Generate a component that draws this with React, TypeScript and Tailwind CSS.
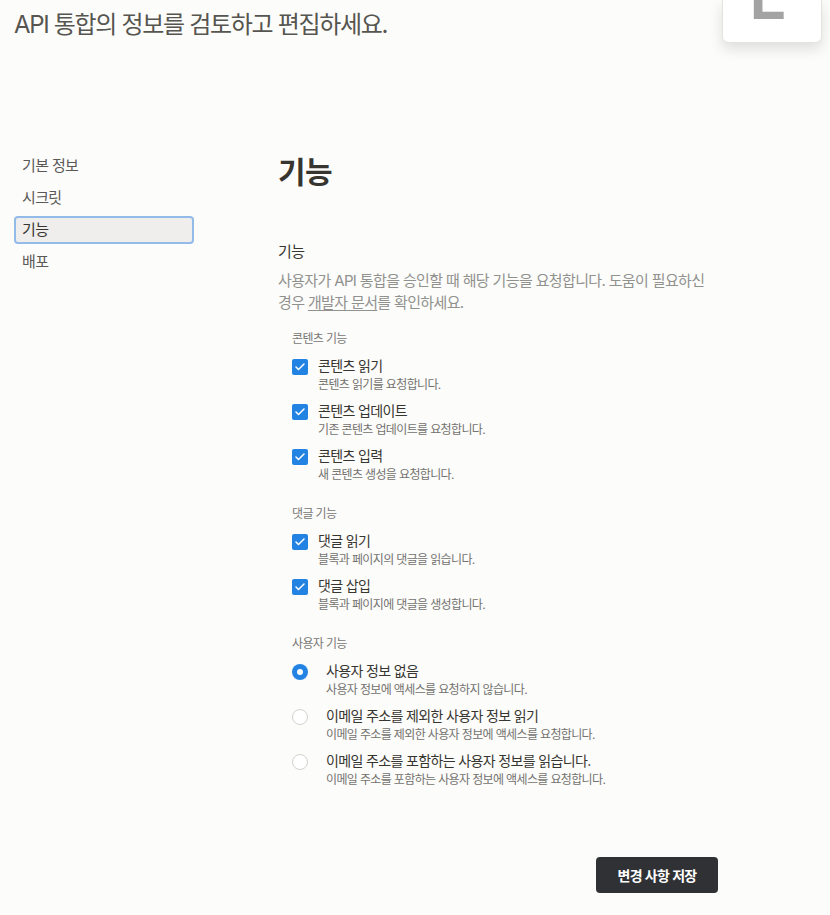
import { Check } from "lucide-react";

const FONT = "font-['Inter','Noto_Sans_CJK_KR',sans-serif] tracking-[-0.04em]";

type Item = { label: string; desc: string; checked?: boolean };

const CONTENT: Item[] = [
  { label: "콘텐츠 읽기", desc: "콘텐츠 읽기를 요청합니다." },
  { label: "콘텐츠 업데이트", desc: "기존 콘텐츠 업데이트를 요청합니다." },
  { label: "콘텐츠 입력", desc: "새 콘텐츠 생성을 요청합니다." },
];

const COMMENTS: Item[] = [
  { label: "댓글 읽기", desc: "블록과 페이지의 댓글을 읽습니다." },
  { label: "댓글 삽입", desc: "블록과 페이지에 댓글을 생성합니다." },
];

const USERS: Item[] = [
  { label: "사용자 정보 없음", desc: "사용자 정보에 액세스를 요청하지 않습니다.", checked: true },
  { label: "이메일 주소를 제외한 사용자 정보 읽기", desc: "이메일 주소를 제외한 사용자 정보에 액세스를 요청합니다." },
  { label: "이메일 주소를 포함하는 사용자 정보를 읽습니다.", desc: "이메일 주소를 포함하는 사용자 정보에 액세스를 요청합니다." },
];

const NAV = ["기본 정보", "시크릿", "기능", "배포"];

function CheckRow({ item }: { item: Item }) {
  return (
    <div className="flex gap-[10px]">
      <div className="mt-[3px] flex h-4 w-4 shrink-0 items-center justify-center rounded-[2px] bg-[#2383e2]">
        <Check className="h-3 w-3 text-white" strokeWidth={3} />
      </div>
      <div>
        <div className="text-[14px] leading-5 text-[#37352f]">{item.label}</div>
        <div className="mt-[1px] text-[12px] leading-4 text-[#73726e]">{item.desc}</div>
      </div>
    </div>
  );
}

function RadioRow({ item }: { item: Item }) {
  return (
    <div className="flex gap-[18px]">
      {item.checked ? (
        <div className="mt-[3px] flex h-4 w-4 shrink-0 items-center justify-center rounded-full bg-[#2383e2]">
          <div className="h-[6px] w-[6px] rounded-full bg-white" />
        </div>
      ) : (
        <div className="mt-[3px] h-4 w-4 shrink-0 rounded-full border border-[#d3d2cf] bg-white" />
      )}
      <div>
        <div className="text-[14px] leading-5 text-[#37352f]">{item.label}</div>
        <div className="mt-[1px] text-[12px] leading-4 text-[#73726e]">{item.desc}</div>
      </div>
    </div>
  );
}

function Group({ title, children, first }: { title: string; children: React.ReactNode; first?: boolean }) {
  return (
    <div className={first ? "mt-[17px] pl-[14px]" : "mt-[23px] pl-[14px]"}>
      <div className="text-[12px] leading-4 text-[#787774]">{title}</div>
      <div className="mt-[9px] flex flex-col gap-[8px]">{children}</div>
    </div>
  );
}

export default function App() {
  return (
    <div className={`${FONT} relative min-h-[915px] w-full overflow-hidden bg-[#fcfcfb]`}>
      <div className="absolute right-[8px] top-0 h-[43px] w-[100px] overflow-hidden rounded-b-[6px] border border-t-0 border-[#e4e3e0] bg-white shadow-[0_6px_14px_rgba(0,0,0,0.12)]">
        <span className="absolute left-[26px] top-[-38px] text-[66px] font-semibold leading-none tracking-normal text-[#a3a3a3]">
          L
        </span>
      </div>

      <div className="px-[14px] pt-[9px] text-[24px] leading-8 tracking-[-0.055em] text-[#56554f]">
        API 통합의 정보를 검토하고 편집하세요.
      </div>

      <div className="mt-[111px] flex">
        <nav className="ml-[14px] flex w-[180px] flex-col gap-1">
          {NAV.map((n) =>
            n === "기능" ? (
              <div
                key={n}
                className="flex h-[28px] items-center rounded-[4px] border-2 border-[#93bbea] bg-[#efeeec] px-[6px] text-[15px] text-[#37352f]"
              >
                {n}
              </div>
            ) : (
              <div key={n} className="flex h-[28px] items-center px-2 text-[15px] text-[#5a5955]">
                {n}
              </div>
            ),
          )}
        </nav>

        <main className="ml-[84px] w-[440px]">
          <h1 className="mt-[2px] text-[30px] font-bold leading-9 text-[#37352f]">기능</h1>
          <div className="mt-[51px] text-[15px] leading-[22px] text-[#37352f]">기능</div>
          <p className="mt-[7px] break-keep text-[15px] leading-[22px] text-[#91918e]">
            사용자가 API 통합을 승인할 때 해당 기능을 요청합니다. 도움이 필요하신 경우{" "}
            <span className="underline underline-offset-2">개발자 문서</span>를 확인하세요.
          </p>

          <Group title="콘텐츠 기능" first>
            {CONTENT.map((i) => (
              <CheckRow key={i.label} item={i} />
            ))}
          </Group>
          <Group title="댓글 기능">
            {COMMENTS.map((i) => (
              <CheckRow key={i.label} item={i} />
            ))}
          </Group>
          <Group title="사용자 기능">
            {USERS.map((i) => (
              <RadioRow key={i.label} item={i} />
            ))}
          </Group>

          <div className="mt-[69px] flex justify-end">
            <button className="h-9 w-[122px] rounded-[4px] bg-[#2f3134] text-[14px] font-semibold text-white">
              변경 사항 저장
            </button>
          </div>
        </main>
      </div>
    </div>
  );
}
